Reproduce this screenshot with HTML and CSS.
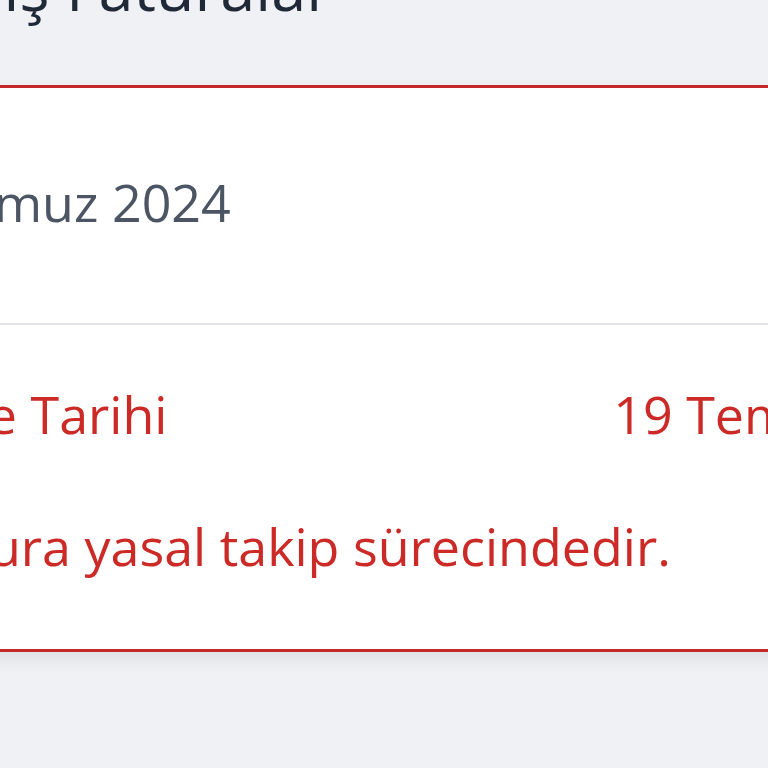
FILE: index.html
```html
<!DOCTYPE html>
<html lang="tr">
<head>
    <meta charset="UTF-8">
    <meta name="viewport" content="width=device-width, initial-scale=1.0">
    <title>Ödenmemiş Faturalar</title>
    <link rel="stylesheet" href="styles.css">
</head>
<body>
    <div class="page">
        <h1 class="page-title">Ödenmemiş Faturalar</h1>

        <div class="invoice-card overdue">
            <div class="invoice-head">
                <span class="head-icon">
                    <svg viewBox="0 0 24 24" width="110" height="60" fill="none" stroke="#c62828" stroke-width="2">
                        <rect x="4" y="3" width="16" height="18" rx="2"/>
                        <path d="M8 8h8M8 12h8M8 16h5"/>
                    </svg>
                </span>
                <span class="period">Temmuz 2024</span>
            </div>
            <div class="invoice-body">
                <div class="info-row">
                    <span>Son Ödeme Tarihi</span>
                    <span>19 Temmuz 2024</span>
                </div>
                <div class="legal-note">
                    <svg class="note-icon" viewBox="0 0 24 24" width="64" height="60" fill="none" stroke="#cc2b27" stroke-width="2">
                        <path d="M12 3L2 20h20L12 3z"/>
                        <path d="M12 10v4M12 17v.5"/>
                    </svg>
                    <span>Bu fatura yasal takip sürecindedir.</span>
                </div>
            </div>
        </div>
    </div>
</body>
</html>
```

FILE: styles.css
```css
html, body {
    margin: 0;
    height: 100%;
    overflow: hidden;
}

body {
    font-family: "Open Sans", "Noto Sans", sans-serif;
    background-color: #f0f1f5;
}

.page {
    width: 1382px;
    margin-top: -53px;
    margin-left: -310px;
}

.page-title {
    margin: 0 0 58px;
    font-size: 63px;
    font-weight: 500;
    line-height: 80px;
    color: #1f2937;
    white-space: nowrap;
}

.invoice-card {
    background-color: #fff;
    border: 3px solid #c4282a;
    box-shadow: 0 8px 16px rgba(0, 0, 0, 0.07);
}

.invoice-head {
    display: flex;
    align-items: center;
    gap: 45px;
    padding: 84px 40px 91px;
    border-bottom: 2px solid #e3e4e9;
}

.head-icon {
    display: flex;
}

.period {
    font-size: 52px;
    line-height: 60px;
    color: #4b5563;
}

.invoice-body {
    padding: 59px 40px 73px;
    color: #cc2a27;
    font-size: 52px;
    line-height: 60px;
}

.info-row {
    display: flex;
    justify-content: space-between;
    white-space: nowrap;
}

.legal-note {
    display: flex;
    align-items: center;
    gap: 48px;
    margin-top: 72px;
    white-space: nowrap;
}

.note-icon {
    flex-shrink: 0;
}
```
